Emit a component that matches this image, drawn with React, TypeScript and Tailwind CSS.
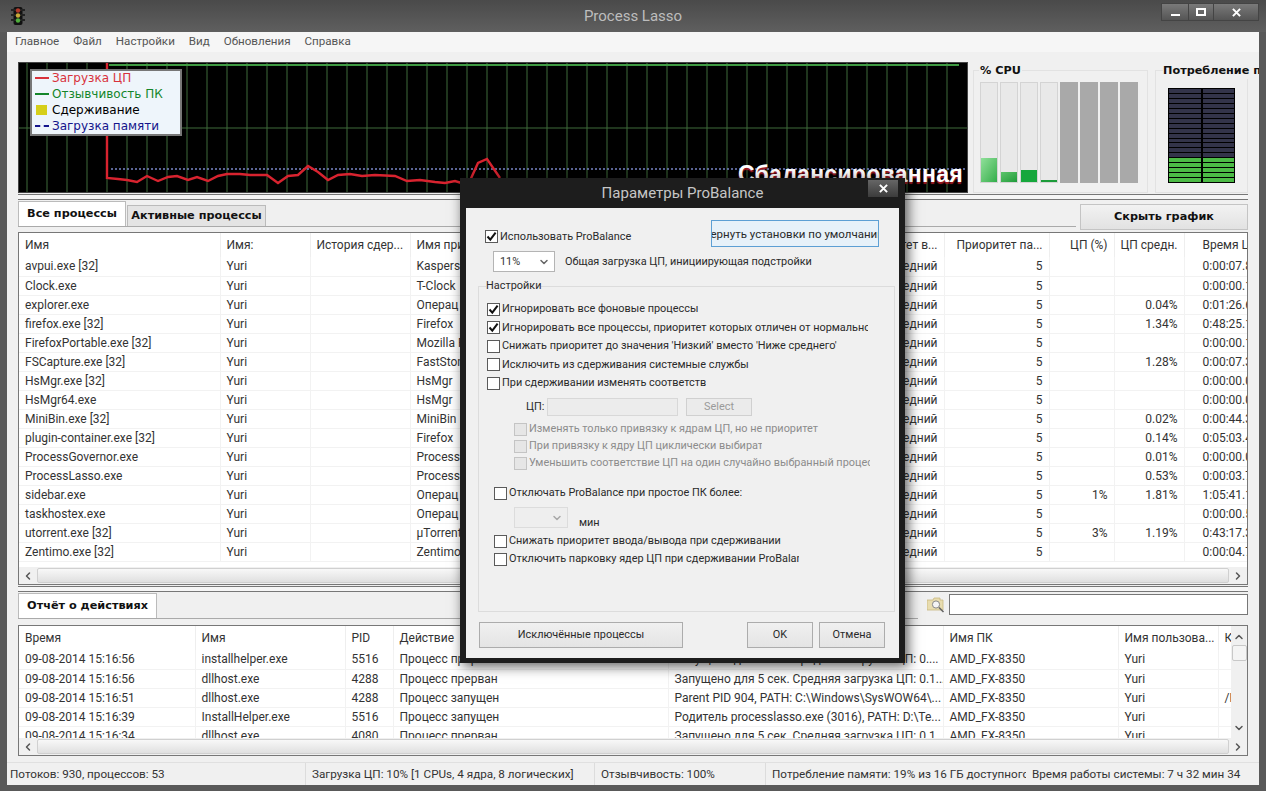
import { ChevronDown, ChevronLeft, ChevronRight, ChevronUp } from 'lucide-react';

const UI_FONT = "font-['Roboto','Liberation_Sans',sans-serif]";
const BOLD_FONT = "font-['DejaVu_Sans',sans-serif] font-bold text-[11.25px]";

const PROCESSES = [
  ['avpui.exe [32]', 'Kaspersk', '', '', '0:00:07.85'],
  ['Clock.exe', 'T-Clock', '', '', '0:00:00.14'],
  ['explorer.exe', 'Операц', '', '0.04%', '0:01:26.60'],
  ['firefox.exe [32]', 'Firefox', '', '1.34%', '0:48:25.14'],
  ['FirefoxPortable.exe [32]', 'Mozilla F', '', '', '0:00:00.14'],
  ['FSCapture.exe [32]', 'FastSton', '', '1.28%', '0:00:07.37'],
  ['HsMgr.exe [32]', 'HsMgr', '', '', '0:00:00.03'],
  ['HsMgr64.exe', 'HsMgr', '', '', '0:00:00.03'],
  ['MiniBin.exe [32]', 'MiniBin', '', '0.02%', '0:00:44.39'],
  ['plugin-container.exe [32]', 'Firefox', '', '0.14%', '0:05:03.42'],
  ['ProcessGovernor.exe', 'Process', '', '0.01%', '0:00:00.06'],
  ['ProcessLasso.exe', 'Process', '', '0.53%', '0:00:03.70'],
  ['sidebar.exe', 'Операц', '1%', '1.81%', '1:05:41.12'],
  ['taskhostex.exe', 'Операц', '', '', '0:00:00.54'],
  ['utorrent.exe [32]', 'µTorrent', '3%', '1.19%', '0:43:17.37'],
  ['Zentimo.exe [32]', 'Zentimo', '', '', '0:00:04.76'],
];

const LOG = [
  ['09-08-2014 15:16:56', 'installhelper.exe', '5516', 'Процесс прерван', 'Запущено для 5 сек. Средняя загрузка ЦП: 0....', 'AMD_FX-8350', 'Yuri', ''],
  ['09-08-2014 15:16:56', 'dllhost.exe', '4288', 'Процесс прерван', 'Запущено для 5 сек. Средняя загрузка ЦП: 0.1...', 'AMD_FX-8350', 'Yuri', ''],
  ['09-08-2014 15:16:51', 'dllhost.exe', '4288', 'Процесс запущен', 'Parent PID 904, PATH: C:\\Windows\\SysWOW64\\...', 'AMD_FX-8350', 'Yuri', '/F'],
  ['09-08-2014 15:16:39', 'InstallHelper.exe', '5516', 'Процесс запущен', 'Родитель processlasso.exe (3016), PATH: D:\\Te...', 'AMD_FX-8350', 'Yuri', ''],
  ['09-08-2014 15:16:34', 'dllhost.exe', '4080', 'Процесс прерван', 'Запущено для 5 сек. Средняя загрузка ЦП: 0.1...', 'AMD_FX-8350', 'Yuri', ''],
];

const CPU_BARS = [
  { h: 24, cls: 'bg-gradient-to-br from-[#8fe09a] to-[#2fae4a]' },
  { h: 10, cls: 'bg-gradient-to-br from-[#5cc56c] to-[#1c9c3a]' },
  { h: 12, cls: 'bg-[#16a73c]' },
  { h: 2, cls: 'bg-[#1c9c3a]' },
];

const RED_LINE =
  '88,0 88,115 99,116 108,117 118,119 128,113 139,118 149,114 158,113 169,117 178,114 189,118 199,113 208,111 221,111 231,112 248,112 259,120 269,113 279,112 289,103 299,109 309,117 319,112 331,111 343,113 356,112 376,113 388,118 401,117 416,119 426,120 436,118 449,122 459,100 468,96 481,115';

function Check({ checked, disabled }: { checked?: boolean; disabled?: boolean }) {
  return (
    <span className={`flex h-[13px] w-[13px] shrink-0 items-center justify-center border ${disabled ? 'border-[#c4c4c4] bg-[#e6e6e6]' : 'border-[#5a5a5a] bg-white'}`}>
      {checked && (
        <svg viewBox="0 0 11 11" className="h-[11px] w-[11px]">
          <path d="M1.5 5.5 L4.3 8.6 L9.6 1.6" fill="none" stroke="#111" strokeWidth="2" />
        </svg>
      )}
    </span>
  );
}

function CheckRow({ label, checked, disabled, left, width, height }: { label: string; checked?: boolean; disabled?: boolean; left: string; width: string; height: string }) {
  return (
    <div className={`flex items-center ${left} ${height}`}>
      <Check checked={checked} disabled={disabled} />
      <span className={`ml-[2px] overflow-hidden whitespace-nowrap ${width} ${disabled ? 'text-[#8c8c8c]' : 'text-[#2a2a2a]'}`}>{label}</span>
    </div>
  );
}

function Splitter() {
  return <div className="h-[6px] border-y border-[#777] bg-[#f6f6f6]" />;
}

function HScroll() {
  return (
    <div className="flex h-[17px] items-center bg-[#f0f0f0] text-[#555]">
      <ChevronLeft size={12} strokeWidth={3} className="ml-[3px] shrink-0" />
      <div className="ml-[3px] h-[15px] flex-1 rounded-[2px] border border-[#d0d0d0] bg-gradient-to-b from-[#f8f8f8] to-[#e0e0e0]" />
      <ChevronRight size={12} strokeWidth={3} className="ml-[3px] mr-[3px] shrink-0" />
    </div>
  );
}

function Graph() {
  const verticals = Array.from({ length: 47 }, (_, i) => 8 + i * 20);
  return (
    <div className="relative h-[131px] w-[950px] shrink-0 overflow-hidden border border-[#444] bg-black">
      <svg width="950" height="131" className="block">
        {verticals.map((x) => (
          <line key={x} x1={x} x2={x} y1="0" y2="131" stroke="#3f6b3a" strokeWidth="1" />
        ))}
        <line x1="0" x2="950" y1="65" y2="65" stroke="#3f6b3a" strokeWidth="1" />
        <line x1="90" x2="940" y1="2" y2="2" stroke="#3f9a42" strokeWidth="2" />
        <line x1="92" x2="950" y1="106" y2="106" stroke="#7a86c8" strokeWidth="1.5" strokeDasharray="2 2" />
        <polyline points={RED_LINE} fill="none" stroke="#d8232f" strokeWidth="2.4" />
      </svg>
      <div className="absolute left-[11px] top-[6px] h-[67px] w-[152px] border-2 border-[#777] bg-[#eef5fb] pl-[3px] font-['DejaVu_Sans',sans-serif] text-[12px] leading-[16px]">
        <div className="-mt-[1px] flex items-center"><span className="h-[2px] w-[14px] bg-[#d8323c]" /><span className="ml-[3px] text-[#d8323c]">Загрузка ЦП</span></div>
        <div className="flex items-center"><span className="h-[2px] w-[14px] bg-[#14862a]" /><span className="ml-[3px] text-[#14862a]">Отзывчивость ПК</span></div>
        <div className="flex items-center"><span className="ml-[1px] h-[10px] w-[11px] bg-[#d6cf1a]" /><span className="ml-[5px] text-black">Сдерживание</span></div>
        <div className="flex items-center"><span className="w-[14px] border-t-2 border-dashed border-[#14148c]" /><span className="ml-[3px] text-[#14148c]">Загрузка памяти</span></div>
      </div>
      <div className="absolute right-[4px] top-[98px] whitespace-nowrap font-['Liberation_Sans',sans-serif] text-[23px] font-bold leading-[26px] tracking-[0.3px] text-white [text-shadow:0_2px_1px_#a01820]">
        Сбалансированная
      </div>
    </div>
  );
}

function CpuPanel() {
  return (
    <div className="relative ml-[5px] mt-[8px] h-[123px] w-[175px] shrink-0 border border-[#e2e2e2]">
      <span className={`absolute -top-[8px] left-[5px] bg-[#f0f0f0] px-[1px] leading-[16px] text-[#111] ${BOLD_FONT}`}>% CPU</span>
      <div className="ml-[6px] mt-[11px] flex h-[101px] gap-[2px]">
        {CPU_BARS.map((b, i) => (
          <div key={i} className="flex w-[18px] flex-col justify-end border border-[#d4d4d4] bg-[#e9e9e9]">
            <div className={b.cls} style={{ height: b.h }} />
          </div>
        ))}
        {[0, 1, 2, 3].map((i) => (
          <div key={i} className="w-[18px] bg-[#a9a9a9]" />
        ))}
      </div>
    </div>
  );
}

function MemoryPanel() {
  const segments = Array.from({ length: 19 }, (_, i) => i);
  return (
    <div className="relative ml-[7px] mt-[8px] h-[123px] w-[93px] shrink-0 border border-[#e2e2e2]">
      <span className={`absolute -top-[8px] left-[7px] w-[96px] overflow-hidden whitespace-nowrap bg-[#f0f0f0] leading-[16px] text-[#111] ${BOLD_FONT}`}>Потребление памяти</span>
      <div className="ml-[12px] mt-[17px] flex h-[95px] w-[67px] gap-[2px] bg-black px-[1px]">
        {[0, 1].map((c) => (
          <div key={c} className="flex flex-1 flex-col pt-[1px]">
            {segments.map((s) => (
              <div key={s} className={`h-[4px] mb-[1px] ${s >= 14 ? 'bg-[#4cbb46]' : 'bg-[#33344a]'}`} />
            ))}
          </div>
        ))}
      </div>
    </div>
  );
}

function ProcessTable() {
  const head = 'border-r border-[#eeeeee] px-[6px] font-normal whitespace-nowrap overflow-hidden';
  const cell = 'border-r border-b border-[#f2f2f2] px-[6px] whitespace-nowrap overflow-hidden';
  return (
    <div className="h-[353px] border border-[#777] bg-white">
      <div className="h-[334px] overflow-hidden">
        <table className="w-[1230px] table-fixed border-collapse text-[12px] text-[#333]">
          <colgroup>
            <col className="w-[201px]" />
            <col className="w-[90px]" />
            <col className="w-[100px]" />
            <col className="w-[150px]" />
            <col className="w-[384px]" />
            <col className="w-[105px]" />
            <col className="w-[65px]" />
            <col className="w-[70px]" />
            <col className="w-[65px]" />
          </colgroup>
          <thead>
            <tr className="h-[24px]">
              <th className={`${head} text-left`}>Имя</th>
              <th className={`${head} text-left`}>Имя:</th>
              <th className={`${head} text-left`}>История сдер...</th>
              <th className={`${head} text-left`}>Имя приложения</th>
              <th className={`${head} text-right`}>Приоритет в...</th>
              <th className={`${head} text-right`}>Приоритет па...</th>
              <th className={`${head} text-right`}>ЦП (%)</th>
              <th className={`${head} text-right`}>ЦП средн.</th>
              <th className="overflow-hidden whitespace-nowrap pl-[18px] text-left font-normal">Время ЦП</th>
            </tr>
          </thead>
          <tbody>
            {PROCESSES.map((p) => (
              <tr key={p[0]} className="h-[19px]">
                <td className={cell}>{p[0]}</td>
                <td className={cell}>Yuri</td>
                <td className={cell}></td>
                <td className={cell}>{p[1]}</td>
                <td className={`${cell} text-right`}>Средний</td>
                <td className={`${cell} text-right`}>5</td>
                <td className={`${cell} text-right`}>{p[2]}</td>
                <td className={`${cell} text-right`}>{p[3]}</td>
                <td className="overflow-hidden whitespace-nowrap border-b border-[#f2f2f2] pl-[18px]">{p[4]}</td>
              </tr>
            ))}
          </tbody>
        </table>
      </div>
      <HScroll />
    </div>
  );
}

function LogTable() {
  const cell = 'border-r border-b border-[#f2f2f2] px-[6px] whitespace-nowrap overflow-hidden';
  const head = 'border-r border-[#eeeeee] px-[6px] font-normal text-left whitespace-nowrap overflow-hidden';
  return (
    <div className="h-[131px] border border-[#777] bg-white">
      <div className="flex h-[112px]">
        <div className="w-[1213px] overflow-hidden">
          <table className="w-[1213px] table-fixed border-collapse text-[12px] text-[#333]">
            <colgroup>
              <col className="w-[176px]" />
              <col className="w-[150px]" />
              <col className="w-[48px]" />
              <col className="w-[275px]" />
              <col className="w-[275px]" />
              <col className="w-[175px]" />
              <col className="w-[100px]" />
              <col className="w-[14px]" />
            </colgroup>
            <thead>
              <tr className="h-[24px]">
                <th className={head}>Время</th>
                <th className={head}>Имя</th>
                <th className={head}>PID</th>
                <th className={head}>Действие</th>
                <th className={head}>Подробности</th>
                <th className={head}>Имя ПК</th>
                <th className={head}>Имя пользова...</th>
                <th className="overflow-hidden pl-[6px] text-left font-normal">К</th>
              </tr>
            </thead>
            <tbody>
              {LOG.map((r, i) => (
                <tr key={i} className="h-[19px]">
                  {r.slice(0, 7).map((v, j) => (
                    <td key={j} className={cell}>{v}</td>
                  ))}
                  <td className="overflow-hidden whitespace-nowrap border-b border-[#f2f2f2] pl-[6px]">{r[7]}</td>
                </tr>
              ))}
            </tbody>
          </table>
        </div>
        <div className="flex w-[16px] flex-col items-center bg-[#f0f0f0] text-[#555]">
          <ChevronUp size={12} strokeWidth={3} className="mt-[5px] shrink-0" />
          <div className="mt-[2px] h-[16px] w-[15px] rounded-[2px] border border-[#c8c8c8] bg-[#f4f4f4]" />
          <ChevronDown size={12} strokeWidth={3} className="mt-auto mb-[4px] shrink-0" />
        </div>
      </div>
      <HScroll />
    </div>
  );
}

function ProBalanceDialog() {
  const btn = 'flex items-center justify-center border border-[#acacac] bg-gradient-to-b from-[#f0f0f0] to-[#e4e4e4] text-[#2a2a2a]';
  return (
    <div className={`absolute left-[460px] top-[178px] h-[485px] w-[445px] bg-[#1d1d1d] text-[10.9px] leading-[16px] shadow-[3px_3px_12px_rgba(0,0,0,0.65)] ${UI_FONT}`}>
      <div className="relative flex h-[30px] items-center justify-center text-[15px] text-[#c6c6c6]">
        Параметры ProBalance
        <div className="absolute right-[7px] top-[2px] flex h-[17px] w-[30px] items-center justify-center bg-gradient-to-b from-[#666] to-[#3c3c3c] text-white">
          <svg viewBox="0 0 10 10" className="h-[9px] w-[9px]">
            <path d="M1 1 L9 9 M9 1 L1 9" stroke="#fff" strokeWidth="2.2" />
          </svg>
        </div>
      </div>

      <div className="mx-[6px] h-[450px] bg-[#f0f0f0] pt-[12px]">
        <div className="flex h-[27px] items-start pl-[19px] pr-[20px]">
          <div className="mt-[10px]">
            <CheckRow label="Использовать ProBalance" checked left="" width="w-[180px]" height="h-[13px]" />
          </div>
          <div className="ml-auto flex h-[27px] w-[168px] items-center justify-center overflow-hidden whitespace-nowrap border border-[#5d9fd4] bg-[#e7f1f9] text-[11.5px] text-[#2a2a2a]">
            Вернуть установки по умолчанию
          </div>
        </div>

        <div className="ml-[27px] mt-[4px] flex h-[21px] items-center">
          <div className="flex h-[21px] w-[62px] items-center justify-between border border-[#b4b4b4] bg-white pl-[6px] pr-[4px] text-[#333]">
            11%
            <ChevronDown size={12} strokeWidth={3} className="text-[#666]" />
          </div>
          <span className="ml-[10px] text-[#2a2a2a]">Общая загрузка ЦП, инициирующая подстройки</span>
        </div>

        <fieldset className="ml-[12px] mt-[6px] h-[334px] w-[417px] border border-[#dcdcdc]">
          <legend className="ml-[7px] px-0 text-[#2a2a2a]">Настройки</legend>
          <div className="pt-[6px]">
            <CheckRow label="Игнорировать все фоновые процессы" checked left="ml-[8px]" width="w-[370px]" height="h-[18.5px]" />
            <CheckRow label="Игнорировать все процессы, приоритет которых отличен от нормального" checked left="ml-[8px]" width="w-[366px]" height="h-[18.5px]" />
            <CheckRow label="Снижать приоритет до значения 'Низкий' вместо 'Ниже среднего'" left="ml-[8px]" width="w-[370px]" height="h-[18.5px]" />
            <CheckRow label="Исключить из сдерживания системные службы" left="ml-[8px]" width="w-[370px]" height="h-[18.5px]" />
            <CheckRow label="При сдерживании изменять соответствие" left="ml-[8px]" width="w-[204px]" height="h-[18.5px]" />

            <div className="ml-[47px] mt-[5.5px] flex h-[18px] items-center">
              <span className="w-[21px] text-[#2a2a2a]">ЦП:</span>
              <div className="h-[18px] w-[131px] border border-[#d8d8d8] bg-[#ececec]" />
              <div className="ml-[8px] flex h-[18px] w-[66px] items-center justify-center border border-[#d0d0d0] bg-[#ebebeb] text-[#9a9a9a]">Select</div>
            </div>

            <div className="mt-[4.5px]">
              <CheckRow disabled label="Изменять только привязку к ядрам ЦП, но не приоритет" left="ml-[35px]" width="w-[345px]" height="h-[17px]" />
              <CheckRow disabled label="При привязку к ядру ЦП циклически выбирать" left="ml-[35px]" width="w-[233px]" height="h-[17px]" />
              <CheckRow disabled label="Уменьшить соответствие ЦП на один случайно выбранный процесс" left="ml-[35px]" width="w-[341px]" height="h-[17px]" />
            </div>

            <div className="mt-[12.5px]">
              <CheckRow label="Отключать ProBalance при простое ПК более:" left="ml-[15px]" width="w-[345px]" height="h-[18.5px]" />
            </div>
            <div className="ml-[35px] mt-[4.5px] flex h-[21px] items-end">
              <div className="flex h-[21px] w-[54px] items-center justify-end border border-[#dcdcdc] bg-[#eeeeee] pr-[4px]">
                <ChevronDown size={12} strokeWidth={3} className="text-[#a8a8a8]" />
              </div>
              <span className="-mb-[3px] ml-[11px] text-[#2a2a2a]">мин</span>
            </div>
            <div className="mt-[4px]">
              <CheckRow label="Снижать приоритет ввода/вывода при сдерживании" left="ml-[15px]" width="w-[345px]" height="h-[18px]" />
              <CheckRow label="Отключить парковку ядер ЦП при сдерживании ProBalance" left="ml-[15px]" width="w-[290px]" height="h-[18px]" />
            </div>
          </div>
        </fieldset>

        <div className="ml-[13px] mr-[14px] mt-[10px] flex h-[26px]">
          <div className={`${btn} w-[204px]`}>Исключённые процессы</div>
          <div className={`${btn} ml-auto w-[66px]`}>OK</div>
          <div className={`${btn} ml-[6px] w-[66px]`}>Отмена</div>
        </div>
      </div>
    </div>
  );
}

export default function App() {
  return (
    <div className={`relative h-[791px] w-[1266px] overflow-hidden bg-[#595959] text-[12px] ${UI_FONT}`}>
      {/* Title bar */}
      <div className="relative flex h-[32px] items-center justify-center bg-gradient-to-b from-[#4a4a4a] to-[#5f5f5f] text-[15px] text-[#bdbdbd]">
        <svg viewBox="0 0 14 18" className="absolute left-[11px] top-[7px] h-[18px] w-[14px]">
          <rect x="2.5" y="0" width="9" height="18" rx="2" fill="#111" />
          <rect x="0" y="2" width="14" height="2" fill="#222" />
          <rect x="0" y="7" width="14" height="2" fill="#222" />
          <rect x="0" y="12" width="14" height="2" fill="#222" />
          <circle cx="7" cy="3.5" r="2.2" fill="#b03a2a" />
          <circle cx="7" cy="8.5" r="2.2" fill="#c9a93a" />
          <circle cx="7" cy="13.5" r="2.2" fill="#4fae3c" />
        </svg>
        Process Lasso
        <div className="absolute right-[7px] top-[3px] flex h-[18px] border border-[#444]">
          <div className="flex w-[27px] items-end justify-center border-r border-[#444] bg-gradient-to-b from-[#7a7a7a] to-[#555] pb-[4px]">
            <span className="h-[2px] w-[9px] bg-white" />
          </div>
          <div className="flex w-[25px] items-center justify-center border-r border-[#444] bg-gradient-to-b from-[#7a7a7a] to-[#555]">
            <span className="h-[8px] w-[10px] border-2 border-white" />
          </div>
          <div className="flex w-[44px] items-center justify-center bg-gradient-to-b from-[#7a7a7a] to-[#555]">
            <svg viewBox="0 0 10 10" className="h-[9px] w-[9px]">
              <path d="M1 1 L9 9 M9 1 L1 9" stroke="#fff" strokeWidth="2.2" />
            </svg>
          </div>
        </div>
      </div>

      {/* Client area */}
      <div className="mx-[7px] flex h-[753px] flex-col bg-[#f0f0f0]">
        <div className="flex h-[20px] items-center gap-[14px] bg-[#f6f6f6] pl-[8px] text-[11.6px] text-[#555]">
          {['Главное', 'Файл', 'Настройки', 'Вид', 'Обновления', 'Справка'].map((m) => (
            <span key={m}>{m}</span>
          ))}
        </div>

        <div className="ml-[11px] mr-0 mt-[10px] flex h-[131px] overflow-hidden">
          <Graph />
          <CpuPanel />
          <MemoryPanel />
        </div>

        <div className="ml-[11px] mr-[11px] mt-[1px]">
          <Splitter />

          <div className="mt-[2px] flex h-[30px] items-start">
            <div className="flex h-[25px] w-[1058px] items-end border-b border-[#aaa]">
              <div className={`flex h-[25px] w-[108px] items-center justify-center whitespace-nowrap border-x border-t border-[#bbb] bg-white text-[#111] ${BOLD_FONT}`}>Все процессы</div>
              <div className={`ml-[1px] flex h-[21px] w-[139px] items-center justify-center whitespace-nowrap border-x border-t border-[#bbb] bg-[#e4e4e4] text-[#111] ${BOLD_FONT}`}>Активные процессы</div>
            </div>
            <div className={`ml-auto mt-[2px] flex h-[26px] w-[168px] items-center justify-center border border-[#c4c4c4] bg-gradient-to-b from-[#f2f2f2] to-[#e2e2e2] text-[#111] ${BOLD_FONT}`}>Скрыть график</div>
          </div>

          <ProcessTable />

          <div className="mt-[1px]"><Splitter /></div>

          <div className="mt-[2px] flex h-[31px] items-start">
            <div className="flex h-[25px] w-[900px] items-end border-b border-[#aaa]">
              <div className={`flex h-[25px] w-[139px] items-center justify-center whitespace-nowrap border-x border-t border-[#bbb] bg-white text-[#111] ${BOLD_FONT}`}>Отчёт о действиях</div>
            </div>
            <svg viewBox="0 0 18 16" className="ml-[9px] mt-[3px] h-[16px] w-[18px] shrink-0">
              <path d="M0 3 L6 3 L7 1 L13 1 L13 3 L16 3 L16 13 L0 13 Z" fill="#e8dcae" stroke="#c8b880" strokeWidth="0.8" />
              <circle cx="9" cy="7.5" r="3.6" fill="#f4f4f4" stroke="#888" strokeWidth="1" />
              <path d="M12 10.5 L16.5 15" stroke="#666" strokeWidth="1.6" />
            </svg>
            <div className="ml-[4px] h-[21px] flex-1 border border-[#777] bg-white" />
          </div>

          <LogTable />
        </div>

        {/* Status bar */}
        <div className="mt-auto flex h-[23px] items-center border-t border-[#e0e0e0] text-[11.7px] text-[#333]">
          <div className="h-full w-[299px] overflow-hidden whitespace-nowrap border-r border-[#dcdcdc] pl-[3px] leading-[23px]">Потоков: 930, процессов: 53</div>
          <div className="h-full w-[289px] overflow-hidden whitespace-nowrap border-r border-[#dcdcdc] pl-[6px] leading-[23px]">Загрузка ЦП: 10% [1 CPUs, 4 ядра, 8 логических]</div>
          <div className="h-full w-[171px] overflow-hidden whitespace-nowrap border-r border-[#dcdcdc] pl-[6px] leading-[23px]">Отзывчивость: 100%</div>
          <div className="h-full w-[261px] overflow-hidden whitespace-nowrap pl-[6px] leading-[23px]">
            <span className="block w-[254px] overflow-hidden">Потребление памяти: 19% из 16 ГБ доступного</span>
          </div>
          <div className="h-full flex-1 overflow-hidden whitespace-nowrap pl-[5px] leading-[23px]">Время работы системы: 7 ч 32 мин 34</div>
        </div>
      </div>

      <ProBalanceDialog />
    </div>
  );
}
